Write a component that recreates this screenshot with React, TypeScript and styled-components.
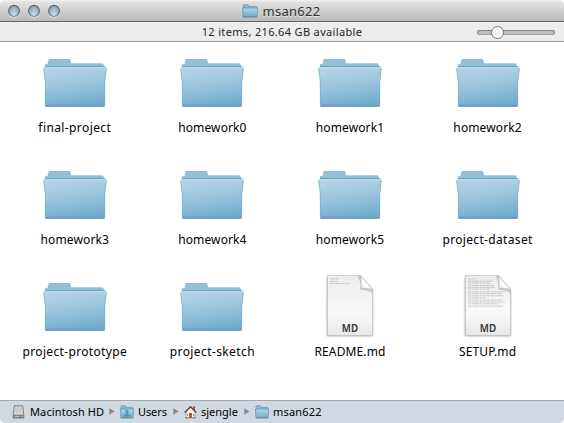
import React from "react";
import styled, { createGlobalStyle } from "styled-components";

const Global = createGlobalStyle`
  * { box-sizing: border-box; }
  body { margin: 0; background: #fff; overflow: hidden; }
`;

const Window = styled.main`
  width: 564px;
  height: 423px;
  display: flex;
  flex-direction: column;
  overflow: hidden;
  border-radius: 5px;
  background: #fff;
  color: #000;
  font-family: "Noto Sans", "Open Sans", sans-serif;
  font-size: 12px;
  line-height: 16px;
  white-space: nowrap;
`;

const TitleBar = styled.header`
  height: 22px;
  flex: none;
  display: grid;
  grid-template-columns: 80px 1fr 80px;
  align-items: center;
  border-bottom: 1px solid #686868;
  background: linear-gradient(#f4f4f4 0, #e2e2e2 2px, #b9b9b9 100%);
`;

const Lights = styled.div`
  display: flex;
  gap: 8px;
  padding: 1px 0 0 8px;
`;

const Light = styled.span`
  width: 12px;
  height: 12px;
  border-radius: 50%;
  border: 1px solid #5f6c77;
  border-top-color: #474f57;
  border-bottom-color: #84909a;
  background: radial-gradient(ellipse at 50% 78%, #cbdde8 0, #9fb6c5 50%, #748997 100%);
  box-shadow: 0 1px 0 #e4e4e4;
`;

const Title = styled.h1<{ $track: number }>`
  margin: 0 1px 0 0;
  display: flex;
  justify-content: center;
  align-items: center;
  gap: 4px;
  font-size: 13px;
  font-weight: 400;
  letter-spacing: ${(p) => p.$track}px;
  color: #303030;
  text-shadow: 0 1px 0 #e4e4e4;
`;

const InfoBar = styled.div`
  height: 20px;
  flex: none;
  display: grid;
  grid-template-columns: 96px 1fr 96px;
  align-items: center;
  border-bottom: 1px solid #a0a0a0;
  background: #ececec;
`;

const Status = styled.div<{ $track: number }>`
  text-align: center;
  font-size: 11px;
  letter-spacing: ${(p) => p.$track}px;
  color: #262626;
`;

const Slider = styled.div`
  width: 78px;
  height: 5px;
  margin-left: 9px;
  margin-top: 1px;
  display: flex;
  align-items: center;
  border: 1px solid #858585;
  border-bottom-color: #a3a3a3;
  border-radius: 3px;
  background: #bebebe;
`;

const Knob = styled.span`
  width: 13px;
  height: 13px;
  flex: none;
  margin-left: 13px;
  border: 1px solid #777;
  border-radius: 50%;
  background: linear-gradient(#fff 0, #f3f3f3 50%, #fff 100%);
`;

const Files = styled.section`
  flex: 1;
  display: grid;
  grid-template-columns: repeat(4, 137.6px);
  grid-template-rows: repeat(3, 112px);
  padding: 7px 0 0 6px;
`;

const FileItem = styled.div`
  display: flex;
  flex-direction: column;
  align-items: center;
`;

const IconBox = styled.div`
  height: 68px;
  margin-bottom: 3px;
  display: flex;
  align-items: center;
`;

const Label = styled.span<{ $track: number }>`
  letter-spacing: ${(p) => p.$track}px;
`;

const PathBar = styled.footer`
  height: 23px;
  flex: none;
  display: flex;
  align-items: center;
  padding: 0 0 1px 12px;
  border-top: 1px solid #a8a8a8;
  background: #d0d8e2;
  font-size: 11px;
`;

const Crumb = styled.span<{ $width: number; $gap: number; $track: number }>`
  width: ${(p) => p.$width}px;
  display: flex;
  align-items: center;
  gap: ${(p) => p.$gap}px;
  letter-spacing: ${(p) => p.$track}px;
`;

const Arrow = styled.svg`
  width: 6px;
  height: 7px;
  flex: none;
  margin-right: 5px;
`;

function Folder({ id }: { id: string }) {
  return (
    <svg width="66" height="50" viewBox="0 0 66 50">
      <defs>
        <linearGradient id={id} x1="0.15" y1="0" x2="0.35" y2="1">
          <stop offset="0" stopColor="#b8d5e7" />
          <stop offset="0.5" stopColor="#9cc5dd" />
          <stop offset="1" stopColor="#74adcf" />
        </linearGradient>
      </defs>
      <path d="M3.200 47.500h59.600v1.300H3.200z" fill="#76838c" />
      <path d="M3 10V6.500l2.600-.8.800-3.500Q6.700 1 7.800 1h19q1.200 0 1.500 1l.5 3.600H60q1.600 0 1.800 1.400L62 10z" fill="#93bfd8" />
      <path d="M7 2.200Q7.400 1.500 8.200 1.500h18.300q.8 0 1 .8L28.300 6H60" fill="none" stroke="#8ab8d2" strokeWidth=".7" />
      <path d="M2.400 9Q1.100 9.300 1.300 11L3 23.500v23.200q.1 1.200 1.400 1.200h57.200q1.300 0 1.400-1.200V23.500L64.700 11q.2-1.700-1-2L62 8.300H4z" fill={`url(#${id})`} />
      <path d="M3 8.500h60" stroke="#67a3c4" strokeWidth="1" />
      <path d="M3 9.500h60" stroke="#bfdceb" strokeWidth="1" />
      <path d="M1.700 11L3.300 23.500V47M64.300 11L62.700 23.500V47" fill="none" stroke="#70a8c8" strokeWidth=".6" />
      <path d="M4 47.300h58" stroke="#5a97ba" strokeWidth="1" />
      <path d="M14 18h1M36 15h1M52 20h1M25 29h1M43 32h1M56 36h1M12 39h1M33 42h1M50 43h1M48 27h1" stroke="#679dbe" strokeOpacity=".45" strokeWidth=".8" />
    </svg>
  );
}

const shortText = ["M5 5h9", "M5 7.500h8", "M5 9.500h20"];
const longText = [
  "M5 5h8", "M5 7.200h25", "M5 9h22", "M5 11.400h26", "M5 13.400h27", "M5 15h22",
  "M5 17.800h37", "M5 19.600h34", "M5 21.800h36", "M5 23.800h18", "M5 26h35", "M5 28h37", "M5 29.800h30", "M5 32.200h35",
];

function Doc({ id, long }: { id: string; long?: boolean }) {
  return (
    <svg width="50" height="67" viewBox="0 0 50 67">
      <defs>
        <linearGradient id={id} x1="0" y1="0" x2="0" y2="1">
          <stop offset="0" stopColor="#ececec" />
          <stop offset=".65" stopColor="#f9f9f9" />
          <stop offset="1" stopColor="#e6e6e6" />
        </linearGradient>
        <linearGradient id={`${id}f`} x1="0" y1="1" x2="1" y2="0">
          <stop offset="0" stopColor="#e0e0e0" />
          <stop offset=".35" stopColor="#fff" />
          <stop offset="1" stopColor="#dedede" />
        </linearGradient>
        <filter id={`${id}s`} x="-10%" y="-10%" width="120%" height="120%">
          <feGaussianBlur stdDeviation=".8" />
        </filter>
      </defs>
      <path d="M2 3h33l12.500 13v46H2z" fill="#555" opacity=".6" filter={`url(#${id}s)`} />
      <path d="M2.500 1.500H35.500L47.500 15.500v46h-45z" fill={`url(#${id})`} stroke="#c0c0c0" strokeWidth=".6" />
      {(long ? longText : shortText).map((d) => (
        <path key={d} d={d} stroke="#a8a8a8" strokeWidth=".55" strokeDasharray="3 .5 2 .4 5 .6" />
      ))}
      <path d="M32 1.800h3.500L47.500 15.500v4q-4-3.500-12-3.500Q36 7 32 1.800z" fill="#777" opacity=".3" />
      <path d="M35.500 1.500q1 4.500.5 12.700 7.500-.2 11.500 1.300z" fill={`url(#${id}f)`} stroke="#aaa" strokeWidth=".5" />
      <text x="25" y="58" textAnchor="middle" fontFamily="Noto Sans, sans-serif" fontSize="9.800" fontWeight="600" fill="#333">MD</text>
    </svg>
  );
}

function MiniFolder({ id, width }: { id: string; width: number }) {
  return (
    <svg width={width} height="14" viewBox="0 0 16 14" preserveAspectRatio="none">
      <defs>
        <linearGradient id={id} x1="0" y1="0" x2="0" y2="1">
          <stop offset="0" stopColor="#b4d6e9" />
          <stop offset="1" stopColor="#74abcb" />
        </linearGradient>
      </defs>
      <path d="M1.200 4V1.600q0-.8.800-.8h3.600q.8 0 .9.800l.1.800h7.300q.9 0 .9.800V5z" fill="#8ebbd5" stroke="#5f98b7" strokeWidth=".8" />
      <path d="M.5 4h15l-.5 8.600H1z" fill={`url(#${id})`} stroke="#5e98b9" strokeWidth=".8" />
      <path d="M1 13h14" stroke="#55778a" strokeWidth=".8" />
      {id === "users-folder" && (
        <path d="M6.200 6.500q0-2 1.800-2t1.800 2q0 1.600-1 2.300 2.600.6 2.900 2.900H4.300q.3-2.300 2.900-2.900-1-.7-1-2.300z" fill="#5a91b1" />
      )}
    </svg>
  );
}

const Drive = () => (
  <svg width="13" height="14" viewBox="0 0 14 14" preserveAspectRatio="none">
    <path d="M2.500.7h9l1.300 9.200v3.200H1.200V9.900z" fill="#a5a5a5" stroke="#777" strokeWidth=".8" />
    <path d="M3.200 1.400h7.600l1 7.800H2.200z" fill="#dedede" />
    <path d="M4 3h6M3.800 5h6.400M3.600 7h6.800" stroke="#aaa" strokeWidth=".8" />
    <path d="M1.500 9.900h11v2.900h-11z" fill="#777" />
    <path d="M3 11.300h5M10 11.300h1.500" stroke="#e8e8e8" strokeWidth=".8" />
  </svg>
);

const Home = () => (
  <svg width="13" height="14" viewBox="0 0 13 14">
    <path d="M9.200 1.500h1.800v4H9.200z" fill="#8d4b35" />
    <path d="M2 6.500L6.500 2.200 11 6.500v6.300H2z" fill="#f7f3e9" stroke="#8b8275" strokeWidth=".6" />
    <path d="M.7 7.500L6.500 1.700l5.800 5.800" fill="none" stroke="#6b443b" strokeWidth="1.500" />
    <path d="M5.200 8h2.700v5H5.200z" fill="#b64825" />
    <path d="M3 9h1.200v2H3zM9 9h1.200v2H9z" fill="#7996a5" />
    <path d="M1.500 12.900h3M8.500 12.900h3" stroke="#64784a" strokeWidth="1" />
  </svg>
);

const PathArrow = () => (
  <Arrow viewBox="0 0 6 7"><path d="M.3.300L5.500 3.500.3 6.700z" fill="#85898e" /></Arrow>
);

const files = [
  { name: "final-project", track: 0.4 },
  { name: "homework0", track: 0.12 },
  { name: "homework1", track: 0.12 },
  { name: "homework2", track: 0.12 },
  { name: "homework3", track: 0.12 },
  { name: "homework4", track: 0.12 },
  { name: "homework5", track: 0.12 },
  { name: "project-dataset", track: 0.33 },
  { name: "project-prototype", track: 0.34 },
  { name: "project-sketch", track: 0.4 },
  { name: "README.md", track: 0.12 },
  { name: "SETUP.md", track: 0.12 },
];

export default function App() {
  return (
    <Window>
      <Global />
      <TitleBar>
        <Lights><Light /><Light /><Light /></Lights>
        <Title $track={0.3}><MiniFolder id="title-folder" width={16} />msan622</Title>
      </TitleBar>
      <InfoBar>
        <span />
        <Status $track={0.34}>12 items, 216.64 GB available</Status>
        <Slider><Knob /></Slider>
      </InfoBar>
      <Files>
        {files.map((f, i) => (
          <FileItem key={f.name}>
            <IconBox>
              {f.name.endsWith(".md") ? <Doc id={`doc${i}`} long={f.name === "SETUP.md"} /> : <Folder id={`folder${i}`} />}
            </IconBox>
            <Label $track={f.track}>{f.name}</Label>
          </FileItem>
        ))}
      </Files>
      <PathBar>
        <Crumb $width={97} $gap={5} $track={0.12}><Drive />Macintosh HD</Crumb>
        <PathArrow />
        <Crumb $width={53} $gap={4} $track={-0.1}><MiniFolder id="users-folder" width={14} />Users</Crumb>
        <PathArrow />
        <Crumb $width={60} $gap={4} $track={0}><Home />sjengle</Crumb>
        <PathArrow />
        <Crumb $width={80} $gap={4} $track={0.2}><MiniFolder id="path-folder" width={14} />msan622</Crumb>
      </PathBar>
    </Window>
  );
}
